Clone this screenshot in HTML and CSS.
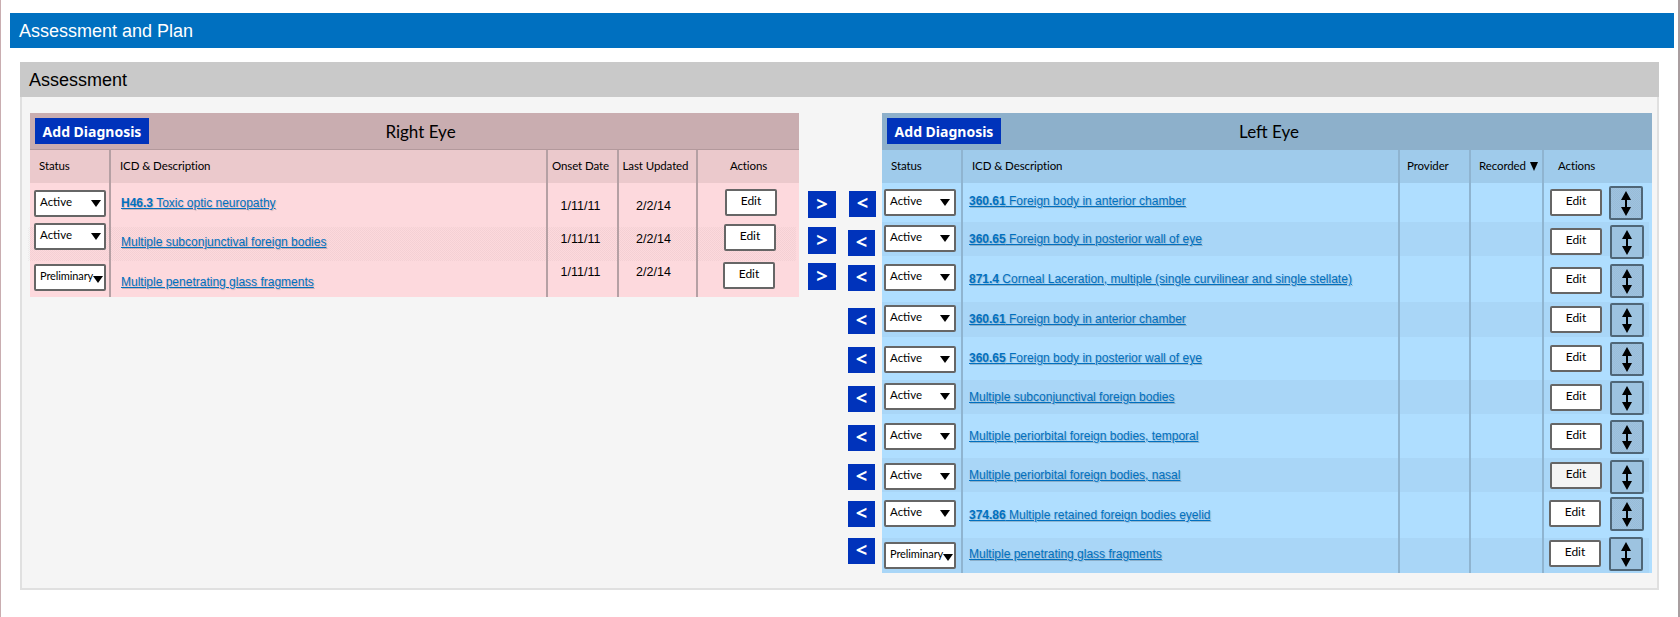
FILE: index.html
```html
<!DOCTYPE html>
<html>
<head>
    <title>Assessment and Plan</title>
    <link rel="stylesheet" href="styles.css">
</head>
<body>
    <div id="page">
        <div class="page-title">Assessment and Plan</div>
        <div class="panel">
            <div class="panel-title">Assessment</div>
            <div class="panel-body">

                <div class="eye eye-right">
                    <div class="eye-title">
                        <button class="add-btn">Add Diagnosis</button>
                        <span class="eye-name">Right Eye</span>
                    </div>
                    <div class="row head">
                        <div class="c-status">Status</div>
                        <div class="c-desc">ICD &amp; Description</div>
                        <div class="c-date">Onset Date</div>
                        <div class="c-date">Last Updated</div>
                        <div class="c-act">Actions</div>
                    </div>
                    <div class="row r1">
                        <div class="c-status"><div class="select"><span>Active</span><i></i></div></div>
                        <div class="c-desc"><a href="#"><b>H46.3</b> Toxic optic neuropathy</a></div>
                        <div class="c-date">1/11/11</div>
                        <div class="c-date">2/2/14</div>
                        <div class="c-act"><button class="edit">Edit</button></div>
                    </div>
                    <div class="row r2 dither">
                        <div class="c-status"><div class="select"><span>Active</span><i></i></div></div>
                        <div class="c-desc"><a href="#">Multiple subconjunctival foreign bodies</a></div>
                        <div class="c-date">1/11/11</div>
                        <div class="c-date">2/2/14</div>
                        <div class="c-act"><button class="edit">Edit</button></div>
                    </div>
                    <div class="row r3">
                        <div class="c-status"><div class="select prelim"><span>Preliminary</span><i></i></div></div>
                        <div class="c-desc"><a href="#">Multiple penetrating glass fragments</a></div>
                        <div class="c-date">1/11/11</div>
                        <div class="c-date">2/2/14</div>
                        <div class="c-act"><button class="edit">Edit</button></div>
                    </div>
                </div>

                <div class="send send-left">
                    <button class="arrow">&gt;</button>
                    <button class="arrow">&gt;</button>
                    <button class="arrow">&gt;</button>
                </div>
                <div class="send send-right">
                    <button class="arrow">&lt;</button>
                    <button class="arrow">&lt;</button>
                    <button class="arrow">&lt;</button>
                    <button class="arrow">&lt;</button>
                    <button class="arrow">&lt;</button>
                    <button class="arrow">&lt;</button>
                    <button class="arrow">&lt;</button>
                    <button class="arrow">&lt;</button>
                    <button class="arrow">&lt;</button>
                    <button class="arrow">&lt;</button>
                </div>

                <div class="eye eye-left">
                    <div class="eye-title">
                        <button class="add-btn">Add Diagnosis</button>
                        <span class="eye-name">Left Eye</span>
                    </div>
                    <div class="row head">
                        <div class="c-status">Status</div>
                        <div class="c-desc">ICD &amp; Description</div>
                        <div class="c-prov">Provider</div>
                        <div class="c-rec">Recorded <i class="sort"></i></div>
                        <div class="c-act">Actions</div>
                    </div>
                    <div class="row l1">
                        <div class="c-status"><div class="select"><span>Active</span><i></i></div></div>
                        <div class="c-desc"><a href="#"><b>360.61</b> Foreign body in anterior chamber</a></div>
                        <div class="c-prov"></div>
                        <div class="c-rec"></div>
                        <div class="c-act"><button class="edit">Edit</button><button class="move dither"><svg viewBox="0 0 10 25"><path d="M5 0L10 9H6V16H10L5 25L0 16H4V9H0Z"/></svg></button></div>
                    </div>
                    <div class="row l2 alt">
                        <div class="c-status"><div class="select"><span>Active</span><i></i></div></div>
                        <div class="c-desc"><a href="#"><b>360.65</b> Foreign body in posterior wall of eye</a></div>
                        <div class="c-prov"></div>
                        <div class="c-rec"></div>
                        <div class="c-act"><button class="edit">Edit</button><button class="move"><svg viewBox="0 0 10 25"><path d="M5 0L10 9H6V16H10L5 25L0 16H4V9H0Z"/></svg></button></div>
                    </div>
                    <div class="row l3">
                        <div class="c-status"><div class="select"><span>Active</span><i></i></div></div>
                        <div class="c-desc"><a href="#"><b>871.4</b> Corneal Laceration, multiple (single curvilinear and single stellate)</a></div>
                        <div class="c-prov"></div>
                        <div class="c-rec"></div>
                        <div class="c-act"><button class="edit">Edit</button><button class="move dither"><svg viewBox="0 0 10 25"><path d="M5 0L10 9H6V16H10L5 25L0 16H4V9H0Z"/></svg></button></div>
                    </div>
                    <div class="row l4 alt">
                        <div class="c-status"><div class="select"><span>Active</span><i></i></div></div>
                        <div class="c-desc"><a href="#"><b>360.61</b> Foreign body in anterior chamber</a></div>
                        <div class="c-prov"></div>
                        <div class="c-rec"></div>
                        <div class="c-act"><button class="edit">Edit</button><button class="move"><svg viewBox="0 0 10 25"><path d="M5 0L10 9H6V16H10L5 25L0 16H4V9H0Z"/></svg></button></div>
                    </div>
                    <div class="row l5">
                        <div class="c-status"><div class="select"><span>Active</span><i></i></div></div>
                        <div class="c-desc"><a href="#"><b>360.65</b> Foreign body in posterior wall of eye</a></div>
                        <div class="c-prov"></div>
                        <div class="c-rec"></div>
                        <div class="c-act"><button class="edit">Edit</button><button class="move dither"><svg viewBox="0 0 10 25"><path d="M5 0L10 9H6V16H10L5 25L0 16H4V9H0Z"/></svg></button></div>
                    </div>
                    <div class="row l6 alt">
                        <div class="c-status"><div class="select"><span>Active</span><i></i></div></div>
                        <div class="c-desc"><a href="#">Multiple subconjunctival foreign bodies</a></div>
                        <div class="c-prov"></div>
                        <div class="c-rec"></div>
                        <div class="c-act"><button class="edit">Edit</button><button class="move"><svg viewBox="0 0 10 25"><path d="M5 0L10 9H6V16H10L5 25L0 16H4V9H0Z"/></svg></button></div>
                    </div>
                    <div class="row l7">
                        <div class="c-status"><div class="select"><span>Active</span><i></i></div></div>
                        <div class="c-desc"><a href="#">Multiple periorbital foreign bodies, temporal</a></div>
                        <div class="c-prov"></div>
                        <div class="c-rec"></div>
                        <div class="c-act"><button class="edit">Edit</button><button class="move dither"><svg viewBox="0 0 10 25"><path d="M5 0L10 9H6V16H10L5 25L0 16H4V9H0Z"/></svg></button></div>
                    </div>
                    <div class="row l8 alt">
                        <div class="c-status"><div class="select"><span>Active</span><i></i></div></div>
                        <div class="c-desc"><a href="#">Multiple periorbital foreign bodies, nasal</a></div>
                        <div class="c-prov"></div>
                        <div class="c-rec"></div>
                        <div class="c-act"><button class="edit grey">Edit</button><button class="move"><svg viewBox="0 0 10 25"><path d="M5 0L10 9H6V16H10L5 25L0 16H4V9H0Z"/></svg></button></div>
                    </div>
                    <div class="row l9">
                        <div class="c-status"><div class="select"><span>Active</span><i></i></div></div>
                        <div class="c-desc"><a href="#"><b>374.86</b> Multiple retained foreign bodies eyelid</a></div>
                        <div class="c-prov"></div>
                        <div class="c-rec"></div>
                        <div class="c-act"><button class="edit">Edit</button><button class="move dither"><svg viewBox="0 0 10 25"><path d="M5 0L10 9H6V16H10L5 25L0 16H4V9H0Z"/></svg></button></div>
                    </div>
                    <div class="row l10 alt">
                        <div class="c-status"><div class="select prelim"><span>Preliminary</span><i></i></div></div>
                        <div class="c-desc"><a href="#">Multiple penetrating glass fragments</a></div>
                        <div class="c-prov"></div>
                        <div class="c-rec"></div>
                        <div class="c-act"><button class="edit">Edit</button><button class="move"><svg viewBox="0 0 10 25"><path d="M5 0L10 9H6V16H10L5 25L0 16H4V9H0Z"/></svg></button></div>
                    </div>
                </div>

            </div>
        </div>
    </div>
</body>
</html>
```

FILE: styles.css
```css
html, body {
    margin: 0;
    height: 100%;
    background: #fff;
}

#page {
    box-sizing: border-box;
    width: 1680px;
    height: 617px;
    padding: 13px 4px 0 9px;
    border-left: 1px solid #c9adb0;
    border-right: 2px solid #a99ea0;
    overflow: hidden;
}

.page-title {
    height: 35px;
    padding-left: 9px;
    background: #0070c0;
    color: #fff;
    font: 18px/37px "Liberation Sans", sans-serif;
}

.panel {
    width: 1635px;
    margin: 14px 0 0 10px;
    border: 2px solid #e0e0e0;
    border-top: 0;
    background: #f5f5f5;
}

.panel-title {
    height: 35px;
    margin: 0 -2px;
    padding-left: 9px;
    background: #c9c9c9;
    color: #000;
    font: 18px/37px "Liberation Sans", sans-serif;
}

.panel-body {
    display: flex;
    height: 491px;
    padding: 16px 0 0 8px;
    box-sizing: border-box;
}

/* the two eye tables */
.eye {
    flex: none;
    align-self: flex-start;
}
.eye-right { width: 769px; background: #fdd9dd; }
.eye-left { width: 770px; background: #afdeff; }

.eye-title {
    position: relative;
    box-sizing: border-box;
    height: 37px;
    padding: 5px 0 0 5px;
    border-bottom: 1px solid #b3999c;
}
.eye-right .eye-title { background: #c9adb0; }
.eye-left .eye-title { background: #8db0cb; border-bottom-color: #8db0cb; }

.add-btn {
    display: block;
    width: 114px;
    height: 26px;
    padding: 0;
    border: none;
    background: #0033bb;
    color: #fff;
    font: bold 14px "Noto Sans", sans-serif;
}

.eye-name {
    position: absolute;
    top: 7px;
    left: 0;
    right: 0;
    text-align: center;
    font: 17px/24px Lato, sans-serif;
    color: #000;
}
.eye-right .eye-name { padding-left: 12px; }
.eye-left .eye-name { padding-left: 4px; }

/* rows */
.row {
    display: grid;
    font: 11.5px Lato, sans-serif;
    color: #000;
}
.eye-right .row { grid-template-columns: 79px 437px 71px 79px minmax(0, 1fr); }
.eye-left .row { grid-template-columns: 79px 437px 71px 73px minmax(0, 1fr); }

.row > div {
    box-sizing: border-box;
    border-left: 2px solid #b5a0a4;
}
.row > div:first-child { border-left: 0; }
.eye-left .row > div { border-left-color: #8fb4d0; }
.eye-left .row > div:first-child { border-left: 0; }

.head { height: 33px; line-height: 32px; letter-spacing: -0.1px; }
.eye-right .head { background: #ebc9cc; }
.eye-left .head { background: #9fcbeb; }
.head .c-status { padding-left: 9px; }
.head .c-desc { padding-left: 9px; }
.head .c-date { text-align: center; padding-right: 4px; }
.head .c-prov { padding-left: 7px; }
.head .c-rec { padding-left: 8px; white-space: nowrap; }
.head .c-act { display: block; text-align: center; }
.eye-left .head .c-act { text-align: left; padding-left: 14px; }

.sort {
    display: inline-block;
    width: 0;
    height: 0;
    margin-left: 1px;
    border-style: solid;
    border-width: 9px 4.5px 0;
    border-color: #000 transparent transparent;
    vertical-align: -1px;
}

/* per row spots: this is a wireframe, nothing quite lines up */
.r1 { height: 44px; --sel: 7px; --link: 12px; --date: 15px; --edit: 6px; --ex: 27px; }
.r2 { height: 34px; --sel: -4px; --link: 7px; --date: 4px; --edit: -3px; --ex: 26px; }
.r3 { height: 36px; --sel: 3px; --link: 13px; --date: 3px; --edit: 1px; --ex: 25px; }

.l1 { height: 39px; --sel: 6px; --link: 10px; --edit: 6px; --move: 3px; --ex: 6px; --mx: 7px; }
.l2 { height: 34px; --sel: 3px; --link: 9px; --edit: 6px; --move: 3px; --ex: 6px; --mx: 8px; }
.l3 { height: 46px; --sel: 8px; --link: 15px; --edit: 11px; --move: 8px; --ex: 6px; --mx: 8px; }
.l4 { height: 35px; --sel: 3px; --link: 9px; --edit: 4px; --move: 1px; --ex: 6px; --mx: 8px; }
.l5 { height: 43px; --sel: 9px; --link: 13px; --edit: 8px; --move: 5px; --ex: 6px; --mx: 8px; }
.l6 { height: 34px; --sel: 3px; --link: 9px; --edit: 4px; --move: 1px; --ex: 6px; --mx: 8px; }
.l7 { height: 44px; --sel: 9px; --link: 14px; --edit: 9px; --move: 6px; --ex: 6px; --mx: 8px; }
.l8 { height: 34px; --sel: 5px; --link: 9px; --edit: 4px; --move: 2px; --ex: 6px; --mx: 8px; }
.l9 { height: 46px; --sel: 8px; --link: 15px; --edit: 8px; --move: 5px; --ex: 5px; --mx: 9px; }
.l10 { height: 35px; --sel: 4px; --link: 8px; --edit: 2px; --move: -1px; --ex: 5px; --mx: 8px; }

.alt { background: #a9d6f7; margin-right: 3px; }

.dither {
    background-image: repeating-conic-gradient(rgba(120, 90, 95, 0.07) 0 25%, transparent 0 50%);
    background-size: 2px 2px;
}
.r2 { margin: 0 3px 0 -2px; padding-left: 2px; }

.select {
    box-sizing: border-box;
    position: relative;
    width: 72px;
    height: 27px;
    margin: var(--sel) 0 0 4px;
    padding-left: 4px;
    border: 2px solid #666;
    border-radius: 2px;
    background: #fff;
    font: 11.5px/19px Lato, sans-serif;
}
.eye-left .select { margin-left: 2px; }
.select i {
    position: absolute;
    top: 8px;
    right: 3px;
    width: 0;
    height: 0;
    border-style: solid;
    border-width: 7px 5.5px 0;
    border-color: #000 transparent transparent;
}
.eye-left .select i { right: 4px; }
.select.prelim { font-size: 11px; letter-spacing: -0.1px; }
.select.prelim i,
.eye-left .select.prelim i { right: 1px; top: 10px; }

.c-desc a {
    display: inline-block;
    margin: var(--link) 0 0 10px;
    color: #0070c0;
    font: 12px/16px "Liberation Sans", sans-serif;
    text-decoration: underline;
    text-shadow: 1px 1px 1px rgba(0, 0, 0, 0.18);
}
.eye-left .c-desc a { margin-left: 6px; }

.row:not(.head) .c-date {
    padding: var(--date) 4px 0 0;
    text-align: center;
    font: 12.5px/16px "Liberation Sans", sans-serif;
}
.row:not(.head) .c-date:nth-child(4) { padding-right: 8px; }

.c-act { display: flex; align-items: flex-start; }

.edit {
    flex: none;
    box-sizing: border-box;
    width: 52px;
    height: 27px;
    margin: var(--edit) 0 0 var(--ex);
    padding: 0 0 5px;
    border: 2px solid #666;
    border-radius: 2px;
    background: #fff;
    color: #000;
    font: 12px Lato, sans-serif;
}
.edit.grey { background: #f4f4f4; }

.move {
    flex: none;
    box-sizing: border-box;
    display: flex;
    align-items: center;
    justify-content: center;
    width: 34px;
    height: 34px;
    margin: var(--move) 0 0 var(--mx);
    padding: 0;
    border: 2px solid #4f6677;
    border-radius: 2px;
    background-color: #9dc3e0;
}
.move svg { width: 10px; height: 25px; fill: #000; }

/* the little blue send buttons between the tables */
.send {
    flex: none;
    display: flex;
    flex-direction: column;
    align-self: flex-start;
    padding-top: 78px;
}
.send-left { margin-left: 9px; gap: 9px; }
.send-right { margin-left: 13px; margin-right: 6px; }

.arrow {
    flex: none;
    width: 28px;
    height: 27px;
    padding: 0 0 2px;
    border: none;
    background: #0033bb;
    color: #fff;
    font: bold 20px/20px "Noto Sans", sans-serif;
}
.send-right .arrow { width: 27px; height: 26px; }
.send-right .arrow:nth-child(2) { margin: 13px 0 0 -1px; }
.send-right .arrow:nth-child(3) { margin: 9px 0 0 -1px; }
.send-right .arrow:nth-child(4) { margin: 17px 0 0 -1px; }
.send-right .arrow:nth-child(5) { margin: 13px 0 0 -1px; }
.send-right .arrow:nth-child(6) { margin: 13px 0 0 -1px; }
.send-right .arrow:nth-child(7) { margin: 13px 0 0 -1px; }
.send-right .arrow:nth-child(8) { margin: 13px 0 0 -1px; }
.send-right .arrow:nth-child(9) { margin: 11px 0 0 -1px; }
.send-right .arrow:nth-child(10) { margin: 11px 0 0 -1px; }
```
